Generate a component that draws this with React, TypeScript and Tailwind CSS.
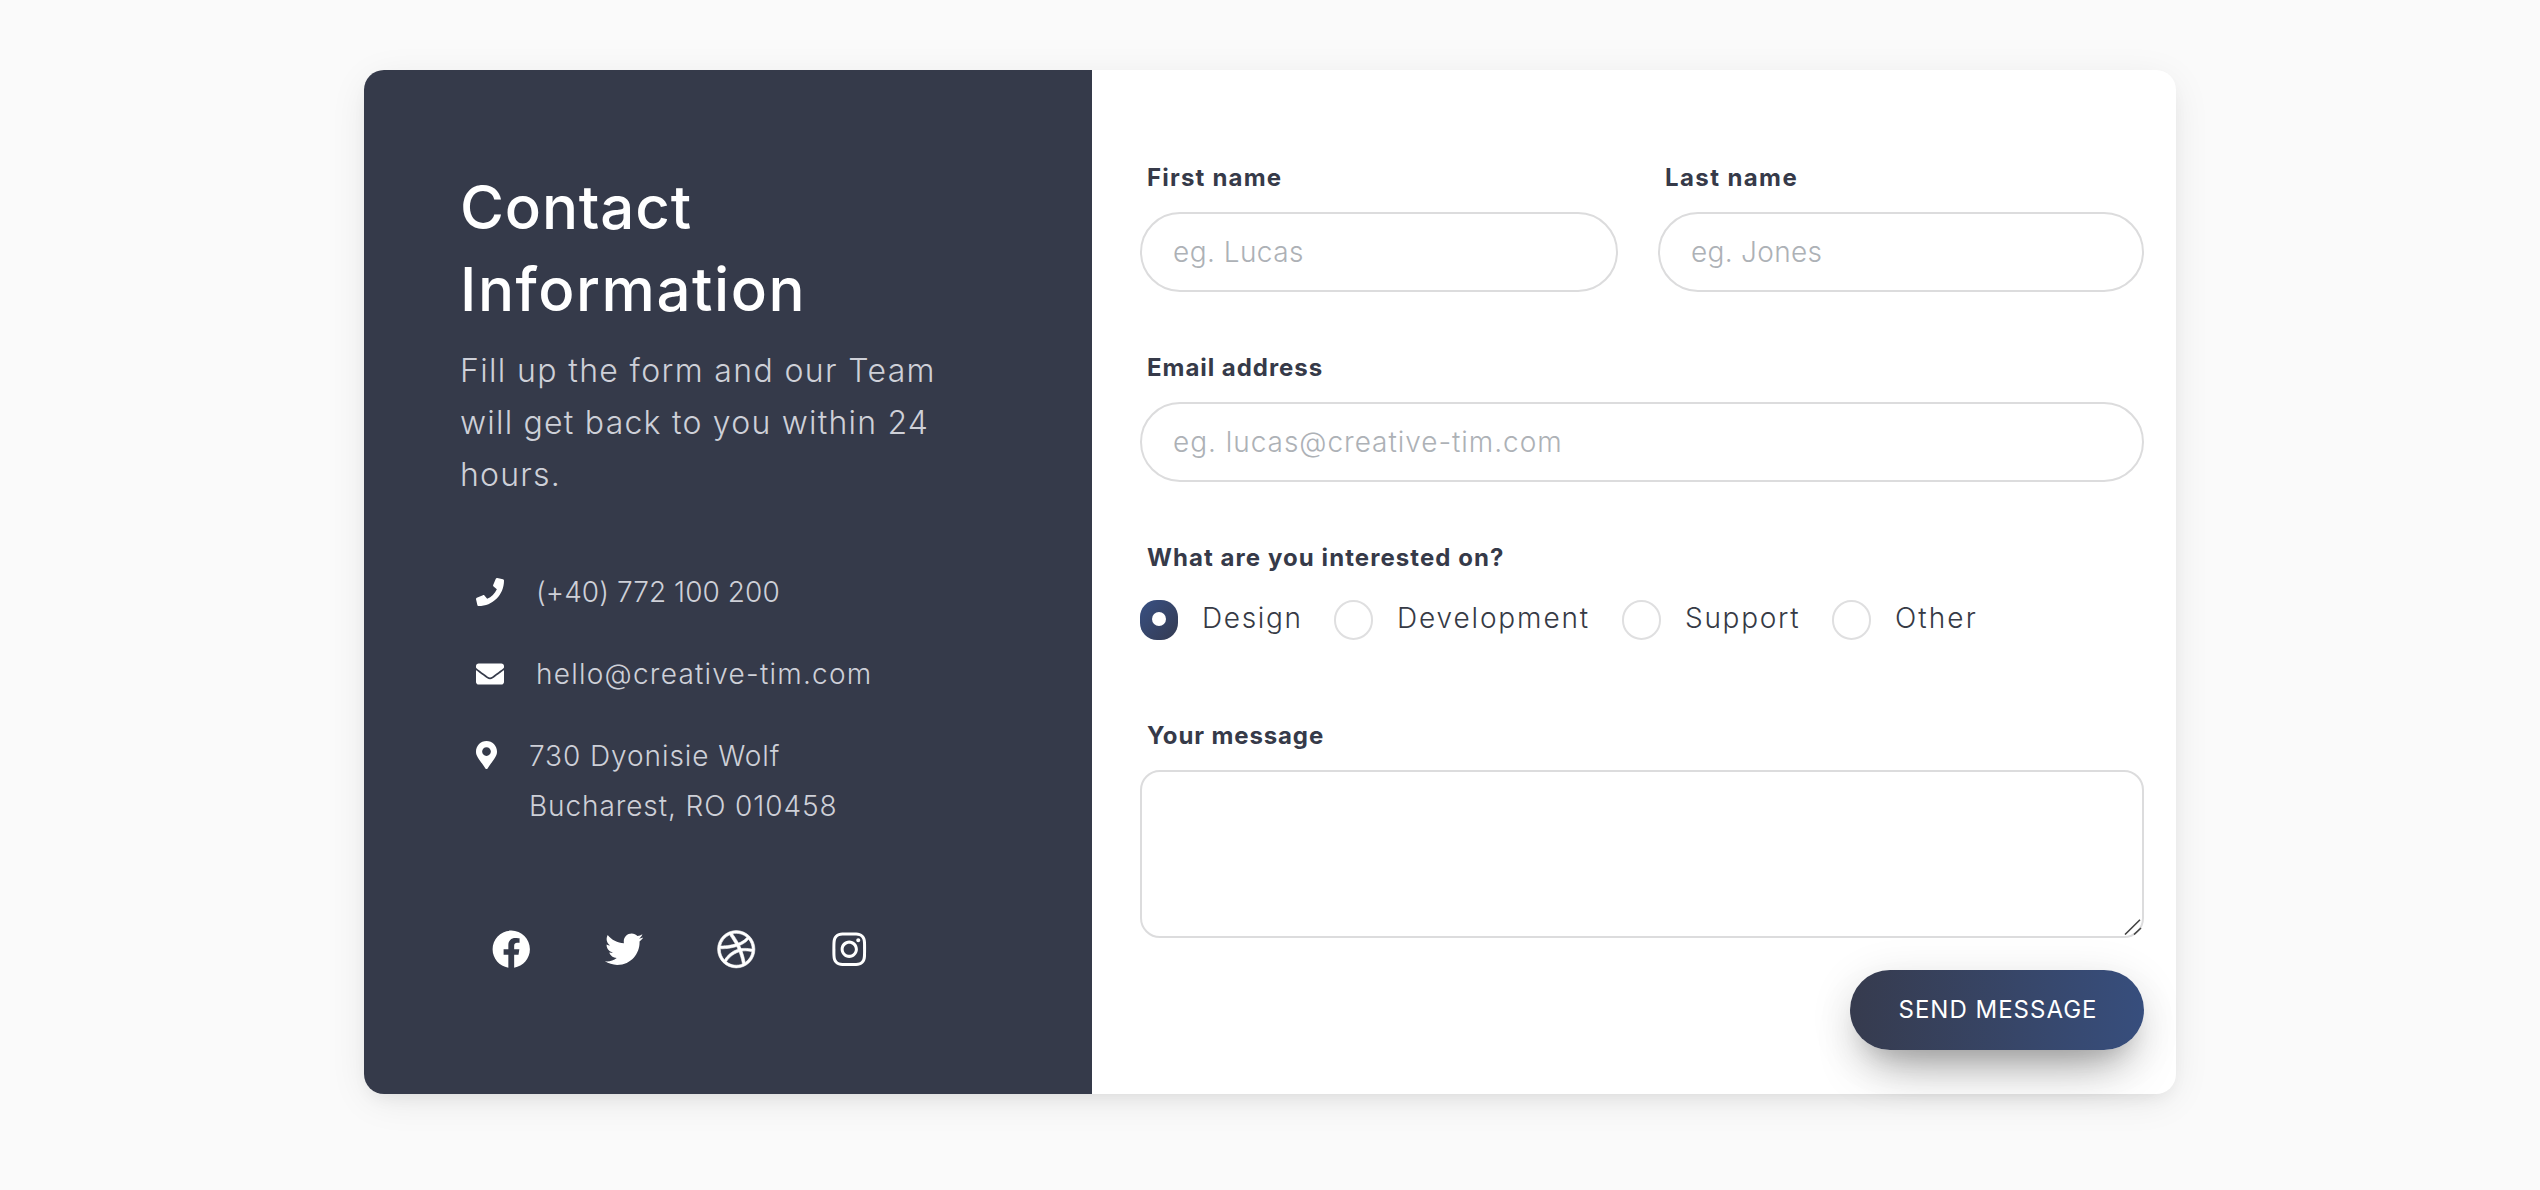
import type { ReactNode } from "react";
import {
  FaDribbble,
  FaEnvelope,
  FaFacebook,
  FaInstagram,
  FaMapMarkerAlt,
  FaPhone,
  FaTwitter,
} from "react-icons/fa";

function Label({ children, className }: { children: ReactNode; className: string }) {
  return (
    <label className={`block pl-[7px] text-2xl leading-9 font-bold whitespace-nowrap text-[#363a49] ${className}`}>
      {children}
    </label>
  );
}

function TextInput({ placeholder, className }: { placeholder: string; className: string }) {
  return (
    <input
      type="text"
      placeholder={placeholder}
      className={`mt-4 block h-20 w-full rounded-full border-2 border-[#dcdcdd] bg-white pl-[31px] text-[28px] font-light text-[#363a49] outline-none placeholder:text-[#adb1b6] ${className}`}
    />
  );
}

function Option({ label, className, tracking, checked = false }: { label: string; className: string; tracking: string; checked?: boolean }) {
  return (
    <label className={`flex h-10 ${className}`}>
      {checked ? (
        <span className="flex h-10 w-[38px] items-center justify-center rounded-[17px] bg-linear-to-br from-[#385083] to-[#343b52]">
          <span className="mb-0.5 size-3.5 rounded-full bg-white" />
        </span>
      ) : (
        <span className="h-10 w-[39px] rounded-[20px] border-2 border-[#dfdfe0] bg-white" />
      )}
      <span className={`ml-6 text-[28px] leading-9 font-light text-[#363a45] ${tracking}`}>{label}</span>
    </label>
  );
}

function ContactPanel() {
  return (
    <section className="flex w-[728px] flex-col rounded-l-[20px] bg-[#353a4a] pt-24 pl-24 text-white">
      <h1 className="text-6xl leading-[82px] font-medium">
        <span className="block tracking-[0.82px]">Contact</span>
        <span className="block tracking-[1.55px]">Information</span>
      </h1>
      <p className="mt-[15px] text-[32px] leading-[52px] font-light text-[#ced0d8]">
        <span className="block tracking-[1.36px]">Fill up the form and our Team</span>
        <span className="block tracking-[1.22px]">will get back to you within 24</span>
        <span className="block tracking-[1.2px]">hours.</span>
      </p>
      <ul className="mt-[66px] flex flex-col gap-8 pl-4 text-[28px] leading-[50px] font-light text-[#ced0d8]">
        <li className="flex items-center gap-8">
          <FaPhone className="size-7 text-white" />
          <span className="tracking-[0.06px]">(+40) 772 100 200</span>
        </li>
        <li className="flex items-center gap-8">
          <FaEnvelope className="size-7 text-white" />
          <span className="tracking-[1.23px]">hello@creative-tim.com</span>
        </li>
        <li className="flex items-start gap-8">
          <FaMapMarkerAlt className="mt-2.5 h-7 w-[21px] text-white" />
          <span>
            <span className="block tracking-[0.92px]">730 Dyonisie Wolf</span>
            <span className="block tracking-[0.9px]">Bucharest, RO 010458</span>
          </span>
        </li>
      </ul>
      <div className="mt-[99px] flex gap-[74px] pl-8">
        <FaFacebook className="size-[38.5px]" />
        <FaTwitter className="size-[38.5px]" />
        <FaDribbble className="size-[38.5px] stroke-white [stroke-width:8px]" />
        <FaInstagram className="size-[38.5px]" />
      </div>
    </section>
  );
}

function ContactForm() {
  return (
    <form className="flex flex-1 flex-col pt-[90px] pr-8 pl-12">
      <div className="flex gap-10">
        <div className="w-[478px]">
          <Label className="tracking-[1.2px]">First name</Label>
          <TextInput placeholder="eg. Lucas" className="tracking-[0.44px]" />
        </div>
        <div className="flex-1">
          <Label className="tracking-[1.4px]">Last name</Label>
          <TextInput placeholder="eg. Jones" className="tracking-[0.31px]" />
        </div>
      </div>
      <div className="mt-[58px]">
        <Label className="tracking-[0.96px]">Email address</Label>
        <TextInput placeholder="eg. lucas@creative-tim.com" className="tracking-[0.96px]" />
      </div>
      <div className="mt-[58px]">
        <Label className="tracking-[1.07px]">What are you interested on?</Label>
        <div className="mt-6 flex">
          <Option label="Design" className="w-[194px]" tracking="tracking-[1.66px]" checked />
          <Option label="Development" className="w-[288px]" tracking="tracking-[1.86px]" />
          <Option label="Support" className="w-[210px]" tracking="tracking-[1.71px]" />
          <Option label="Other" className="w-[160px]" tracking="tracking-[2.08px]" />
        </div>
      </div>
      <div className="mt-[78px]">
        <Label className="tracking-[0.88px]">Your message</Label>
        <div className="relative mt-4">
          <textarea className="block h-[168px] w-full resize-none rounded-[20px] border-2 border-[#dcdcdd] bg-white outline-none" />
          <svg className="absolute right-0.5 bottom-[3px] h-4 w-[18px]" viewBox="0 0 18 16" fill="none" stroke="#444444" strokeWidth="1.6">
            <path d="M1 15.5 16 .8M10 15.5 17 9" />
          </svg>
        </div>
      </div>
      <button
        type="button"
        className="mt-8 h-20 w-[294px] self-end rounded-full bg-linear-to-r from-[#363b4e] to-[#374e7d] pl-0.5 text-2xl leading-9 font-normal tracking-[1px] text-white shadow-[0_28px_52px_-20px_rgba(0,0,0,0.42),0_8px_46px_0_rgba(0,0,0,0.11),0_16px_20px_-10px_rgba(0,0,0,0.10)]"
      >
        SEND MESSAGE
      </button>
    </form>
  );
}

export default function App() {
  return (
    <main className="flex h-[1190px] w-[2540px] items-start justify-center bg-[#fafafa] pt-[70px] font-['Inter',sans-serif]">
      <div className="flex h-[1024px] w-[1812px] rounded-[20px] bg-white shadow-[0_8px_40px_-4px_rgba(0,0,0,0.09),0_8px_18px_-6px_rgba(0,0,0,0.07)]">
        <ContactPanel />
        <ContactForm />
      </div>
    </main>
  );
}
